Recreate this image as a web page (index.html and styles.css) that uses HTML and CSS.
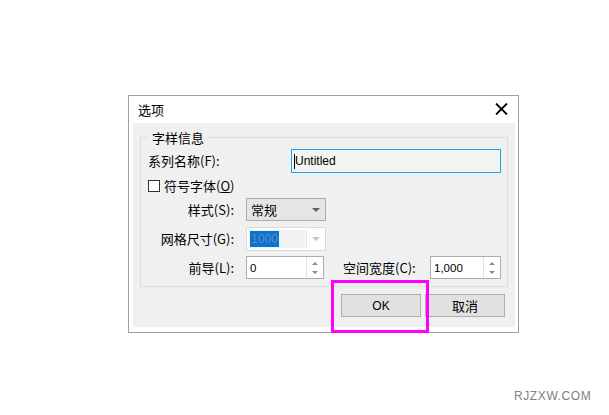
FILE: index.html
```html
<!DOCTYPE html>
<html lang="zh-CN">
<head>
    <meta charset="UTF-8">
    <title>选项</title>
    <link rel="stylesheet" href="styles.css">
</head>
<body>
    <div class="page">
        <div class="dialog">
            <div class="titlebar">
                <span class="title">选项</span>
                <svg class="close" width="13" height="12" viewBox="0 0 13 12">
                    <path d="M1 0.5 L12 11.5 M12 0.5 L1 11.5" stroke="#000" stroke-width="1.8" fill="none"/>
                </svg>
            </div>

            <div class="panel">
                <fieldset class="group">
                    <legend>字样信息</legend>

                    <div class="row row-name">
                        <span class="label-left">系列名称(F):</span>
                        <div class="textbox"><span class="caret"></span>Untitled</div>
                    </div>

                    <div class="row row-check">
                        <span class="checkbox"></span>
                        <span>符号字体(<u>O</u>)</span>
                    </div>

                    <div class="row">
                        <span class="label">样式(S):</span>
                        <div class="combo">
                            <span class="combo-text">常规</span>
                            <span class="arrow"></span>
                        </div>
                    </div>

                    <div class="row">
                        <span class="label">网格尺寸(G):</span>
                        <div class="combo combo-disabled">
                            <span class="combo-field"><span class="selected">1000</span></span>
                            <span class="combo-btn"><span class="arrow"></span></span>
                        </div>
                    </div>

                    <div class="row">
                        <span class="label">前导(L):</span>
                        <div class="spin spin-leading">
                            <span class="spin-value">0</span>
                            <span class="spin-btns"><span class="up"></span><span class="down"></span></span>
                        </div>
                        <span class="label-space">空间宽度(C):</span>
                        <div class="spin spin-space">
                            <span class="spin-value">1,000</span>
                            <span class="spin-btns"><span class="up"></span><span class="down"></span></span>
                        </div>
                    </div>
                </fieldset>

                <div class="buttons">
                    <button class="btn">OK</button>
                    <button class="btn">取消</button>
                </div>
            </div>
        </div>

        <!-- annotation box around OK -->
        <div class="highlight"></div>
        <div class="watermark">RJZXW.COM</div>
    </div>
</body>
</html>
```

FILE: styles.css
```css
* {
    margin: 0;
    padding: 0;
    box-sizing: border-box;
}

body {
    background: #fff;
    font-family: "Noto Sans CJK SC", "Liberation Sans", sans-serif;
    font-size: 13px;
    color: #000;
    overflow: hidden;
}

.page {
    position: relative;
    width: 609px;
    height: 415px;
    padding: 95px 0 0 128px;
}

.dialog {
    width: 391px;
    height: 238px;
    border: 1px solid #a0a0a0;
    background: #fff;
}

.titlebar {
    height: 27px;
    display: flex;
    align-items: center;
    justify-content: space-between;
    padding: 0 10px 0 9px;
}

.title {
    font-size: 13px;
    line-height: 16px;
}

.close {
    display: block;
    margin-top: -2px;
}

.panel {
    height: 204px;
    margin: 0 3px 0 4px;
    background: #f0f0f0;
    padding: 6px 7px 0 7px;
}

.group {
    border: 1px solid #dcdcdc;
    padding: 3px 6px 7px 7px;
    min-width: 0;
    display: flex;
    flex-direction: column;
    gap: 6px;
}

.group legend {
    font-size: 13px;
    line-height: 17px;
    padding: 0 4px;
}

.row {
    display: flex;
    align-items: center;
    height: 23px;
    line-height: 16px;
}

.row-name {
    height: 24px;
}

.row-check {
    height: 13px;
}

.label {
    width: 86px;
    text-align: right;
    margin-right: 12px;
}

.label-space {
    margin-left: 19px;
}

.textbox {
    margin-left: auto;
    width: 210px;
    height: 24px;
    border: 1px solid #1aa6e4;
    background: #f4f4f4;
    font-family: "Liberation Sans", sans-serif;
    font-size: 12px;
    display: flex;
    align-items: center;
    padding-left: 2px;
}

.caret {
    width: 1px;
    height: 15px;
    background: #000;
}

.checkbox {
    width: 12px;
    height: 12px;
    border: 1px solid #333;
    background: #fff;
    margin-right: 4px;
}

.combo {
    width: 80px;
    height: 23px;
    border: 1px solid #adadad;
    background: #e5e5e5;
    display: flex;
    align-items: center;
    justify-content: space-between;
    padding: 0 5px 0 4px;
}

.arrow {
    width: 0;
    height: 0;
    border-left: 4px solid transparent;
    border-right: 4px solid transparent;
    border-top: 4px solid #606060;
}

.combo-disabled {
    height: 24px;
    border-color: #d9d9d9;
    background: #fff;
    padding: 2px 0 2px 2px;
}

.combo-field {
    flex: 1;
    height: 100%;
    background: #f2f2f2;
    display: flex;
    align-items: center;
    padding-left: 1px;
    margin-right: 1px;
}

.selected {
    background: #0078d7;
    color: #7f7f9f;
    font-family: "Liberation Sans", sans-serif;
    font-size: 12px;
    line-height: 16px;
    padding: 0 1px;
}

.combo-btn {
    width: 19px;
    height: 100%;
    border-left: 1px solid #e3e3e3;
    display: flex;
    align-items: center;
    justify-content: center;
}

.combo-btn .arrow {
    border-top-color: #c3c3c3;
}

.spin {
    height: 23px;
    border: 1px solid #adadad;
    background: #fff;
    display: flex;
}

.spin-leading {
    width: 78px;
}

.spin-space {
    width: 71px;
    margin-left: auto;
}

.spin-value {
    flex: 1;
    font-family: "Liberation Sans", sans-serif;
    font-size: 11.5px;
    display: flex;
    align-items: center;
    padding-left: 3px;
}

.spin-btns {
    width: 17px;
    border-left: 1px solid #e3e3e3;
    display: flex;
    flex-direction: column;
    justify-content: space-between;
    align-items: center;
    padding: 5px 0 4px;
}

.spin-btns .up,
.spin-btns .down {
    width: 0;
    height: 0;
    border-left: 3px solid transparent;
    border-right: 3px solid transparent;
}

.spin-btns .up {
    border-bottom: 3px solid #8a8a8a;
}

.spin-btns .down {
    border-top: 3px solid #8a8a8a;
}

.buttons {
    display: flex;
    justify-content: flex-end;
    gap: 4px;
    margin-top: 7px;
    padding-right: 3px;
}

.btn {
    width: 80px;
    height: 23px;
    border: 1px solid #adadad;
    background: #e1e1e1;
    font-family: "Liberation Sans", "Noto Sans CJK SC", sans-serif;
    font-size: 12px;
    color: #000;
}

.btn:last-child {
    font-family: "Noto Sans CJK SC", sans-serif;
    font-size: 13px;
}

.highlight {
    position: absolute;
    left: 331px;
    top: 280px;
    width: 98px;
    height: 53px;
    border: 3px solid #f0f;
}

.watermark {
    position: absolute;
    left: 514px;
    top: 389px;
    font-family: "Liberation Sans", sans-serif;
    font-size: 12px;
    letter-spacing: 0.6px;
    color: #808080;
}
```
